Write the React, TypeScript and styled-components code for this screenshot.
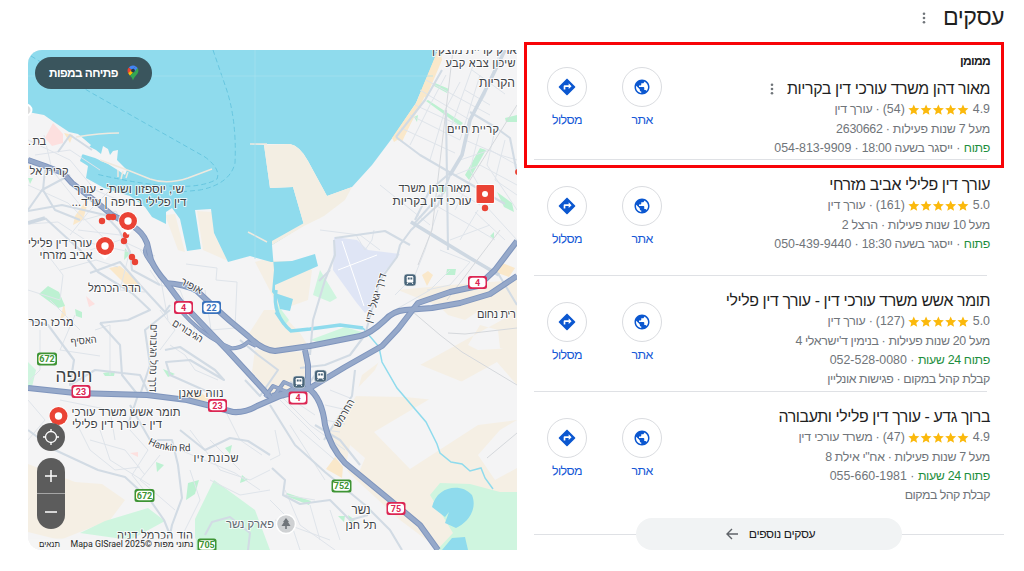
import React from "react";
import styled, { createGlobalStyle } from "styled-components";

const Global = createGlobalStyle`
  *{box-sizing:border-box}
  body{margin:0;background:#fff;font-family:"Liberation Sans",Arial,sans-serif;overflow:hidden}
`;
const Page = styled.main`
  display:grid;grid-template-columns:489px 1fr;column-gap:7px;
  width:1024px;height:571px;padding:0 20px 0 28px;direction:ltr;
`;
const MapPanel = styled.section`
  margin-top:50px;height:500px;border-radius:14px 0 0 14px;overflow:hidden;position:relative;background:#f4f4f5;
  & > svg{display:block}
`;
const OpenMap = styled.button`
  position:absolute;left:7px;top:7px;width:117px;height:32px;border:0;border-radius:16px;background:#3a555d;color:#fff;
  display:flex;align-items:center;justify-content:space-between;padding:0 13px 0 14px;direction:ltr;
  font:bold 11.8px "Liberation Sans",sans-serif;letter-spacing:-.55px;
`;
const MapControls = styled.div`
  position:absolute;left:9px;top:373px;width:28px;display:flex;flex-direction:column;gap:7px;
`;
const Locate = styled.button`
  width:28px;height:28px;padding:0;border:0;border-radius:50%;background:#5c5c5c;display:grid;place-items:center;
`;
const ZoomBox = styled.div`
  width:28px;height:71px;border-radius:14px;background:#5c5c5c;display:grid;grid-template-rows:35px 35px;row-gap:1px;overflow:hidden;
`;
const ZoomButton = styled.button<{ $line?: boolean }>`
  border:0;padding:0;background:transparent;display:grid;place-items:center;
  box-shadow:${p => (p.$line ? "0 1px 0 #a5a5a5" : "none")};
`;
const Results = styled.section`
  direction:rtl;display:flex;flex-direction:column;color:#1f1f1f;
`;
const Header = styled.header`
  height:41px;display:flex;align-items:flex-start;gap:16px;padding-top:3px;
`;
const Heading = styled.h1`
  margin:0;font-size:23.2px;line-height:28px;font-weight:400;color:#1f1f1f;letter-spacing:-.55px;
`;
const Kebab = styled.svg<{ $top?: number }>`
  width:6px;height:12px;flex:none;fill:#70757a;margin-top:${p => p.$top ?? 0}px;
`;
const Card = styled.article<{ $h: number; $line?: boolean }>`
  position:relative;height:${p => p.$h}px;margin:0 17px 0 10px;padding-top:${p => (p.$h === 119 ? 11 : 14)}px;
  display:flex;justify-content:space-between;
  border-bottom:${p => (p.$line ? "1px solid #dfe1e5" : "none")};
`;
const Highlight = styled.div`
  position:absolute;left:-10px;right:-17px;top:1px;height:126px;border:3px solid #f80307;pointer-events:none;
`;
const Info = styled.div`margin-right:-3px;white-space:nowrap;`;
const Sponsored = styled.div`font-size:12px;line-height:18px;font-weight:700;height:26px;color:#202124;letter-spacing:-.7px;`;
const TitleRow = styled.div`display:flex;align-items:center;gap:12px;height:22px;`;
const Title = styled.h2`
  margin:0;font-size:15.9px;line-height:22px;font-weight:400;color:#1f1f1f;letter-spacing:-.4px;
`;
const Line = styled.div`
  display:flex;align-items:center;height:19.4px;font-size:12.4px;line-height:19px;color:#70757a;white-space:pre;
`;
const Text = styled.span<{ $ls?: number }>`letter-spacing:${p => p.$ls ?? 0}px;`;
const Open = styled.span`color:#1e8e3e;letter-spacing:-.34px;`;
const Stars = styled.svg`width:61px;height:12px;margin:0 4px 0 3px;flex:none;`;
const Actions = styled.div`display:flex;gap:35px;height:80px;margin-left:13px;`;
const Action = styled.a<{ $up: number }>`
  width:40px;margin-top:${p => p.$up}px;display:flex;flex-direction:column;align-items:center;color:#1558d6;
  font-size:12.4px;line-height:16px;gap:5px;letter-spacing:-.6px;
`;
const Circle = styled.span`
  width:40px;height:40px;flex:none;border:1px solid #dadce0;border-radius:50%;display:grid;place-items:center;
`;
const MoreRow = styled.div`
  display:flex;align-items:center;height:32px;margin-left:10px;
`;
const Rule = styled.i<{ $w: number }>`width:${p => p.$w}px;height:1px;background:#dfe1e5;flex:none;`;
const MoreButton = styled.button`
  width:266px;height:32px;flex:none;border:0;border-radius:16px;background:#f1f3f4;color:#202124;display:flex;
  align-items:center;justify-content:center;gap:11px;font:12.2px "Liberation Sans",sans-serif;letter-spacing:-.4px;
  direction:rtl;padding:0 0 0 3px;
`;

const Dots = ({ top }: { top?: number }) => (
  <Kebab viewBox="0 0 6 12" $top={top}>
    <circle cx="3" cy="1.7" r="1.3" /><circle cx="3" cy="6" r="1.3" /><circle cx="3" cy="10.3" r="1.3" />
  </Kebab>
);
const RatingStars = () => (
  <Stars viewBox="0 0 61 12">
    {[0, 1, 2, 3, 4].map(i => (
      <path key={i} transform={`translate(${i * 12.3 + 0.6} 0.4) scale(.94)`} fill="#fbb90c"
        d="M5.5 0 7.15 3.8 11.3 4.2 8.15 6.9 9.1 11 5.5 8.85 1.9 11 2.85 6.9-.3 4.2 3.85 3.8z" />
    ))}
  </Stars>
);
const Directions = () => (
  <svg width="20" height="20" viewBox="0 0 24 24" fill="#0b57d0">
    <path d="M21.71 11.29l-9-9a.996.996 0 0 0-1.41 0l-9 9a.996.996 0 0 0 0 1.41l9 9c.39.39 1.02.39 1.41 0l9-9a.996.996 0 0 0 0-1.41zM14 14.5V12h-4v3H8v-4c0-.55.45-1 1-1h5V7.5l3.5 3.5-3.5 3.5z" />
  </svg>
);
const Globe = () => (
  <svg width="18" height="18" viewBox="0 0 24 24" fill="#0b57d0">
    <path d="M12 2C6.48 2 2 6.48 2 12s4.48 10 10 10 10-4.48 10-10S17.52 2 12 2zm-1 17.93c-3.95-.49-7-3.85-7-7.93 0-.62.08-1.21.21-1.79L9 15v1c0 1.1.9 2 2 2v1.93zm6.9-2.54c-.26-.81-1-1.39-1.9-1.39h-1v-3c0-.55-.45-1-1-1H8v-2h2c.55 0 1-.45 1-1V7h2c1.1 0 2-.9 2-2v-.41c2.93 1.19 5 4.06 5 7.41 0 2.08-.8 3.97-2.1 5.39z" />
  </svg>
);

type Biz = {
  title: string; rating: string; count: string; kind: string; years: string; yearsLs: number;
  open: string; hours?: string; phone: string; extra?: string; extraLs?: number; h: number; ad?: boolean;
};
const businesses: Biz[] = [
  { title: "מאור דהן משרד עורכי דין בקריות", rating: "4.9", count: "(54)", kind: "עורך דין", years: "מעל 7 שנות פעילות · 2630662", yearsLs: -0.25, open: "פתוח", hours: "ייסגר בשעה 18:00", phone: "054-813-9909", h: 119, ad: true },
  { title: "עורך דין פלילי אביב מזרחי", rating: "5.0", count: "(161)", kind: "עורך דין", years: "מעל 10 שנות פעילות · הרצל 2", yearsLs: -0.34, open: "פתוח", hours: "ייסגר בשעה 18:30", phone: "050-439-9440", h: 116 },
  { title: "תומר אשש משרד עורכי דין - עורך דין פלילי", rating: "5.0", count: "(127)", kind: "עורך דין", years: "מעל 20 שנות פעילות · בנימין ד'ישראלי 4", yearsLs: -0.37, open: "פתוח 24 שעות", phone: "052-528-0080", extra: "קבלת קהל במקום · פגישות אונליין", extraLs: -0.42, h: 116 },
  { title: "ברוך גדע - עורך דין פלילי ותעבורה", rating: "4.9", count: "(47)", kind: "משרד עורכי דין", years: "מעל 7 שנות פעילות · אח\"י אילת 8", yearsLs: -0.35, open: "פתוח 24 שעות", phone: "055-660-1981", extra: "קבלת קהל במקום", extraLs: -0.53, h: 126 },
];

const BusinessCard = ({ b }: { b: Biz }) => (
  <Card $h={b.h} $line={b.h !== 126}>
    <Info>
      {b.ad && <Sponsored>ממומן</Sponsored>}
      <TitleRow><Title>{b.title}</Title>{b.ad && <Dots />}</TitleRow>
      <Line><span>{b.rating}</span><RatingStars /><span>{b.count}</span><Text $ls={-0.25}>{" · "}{b.kind}</Text></Line>
      <Line><Text $ls={b.yearsLs}>{b.years}</Text></Line>
      <Line><Open>{b.open}</Open><span>{" · "}</span>{b.hours && <Text $ls={-0.26}>{b.hours + " · "}</Text>}<span>{b.phone}</span></Line>
      {b.extra && <Line><Text $ls={b.extraLs}>{b.extra}</Text></Line>}
    </Info>
    <Actions>
      <Action $up={b.ad ? 15 : 12}><Circle><Globe /></Circle>אתר</Action>
      <Action $up={b.ad ? 15 : 12}><Circle><Directions /></Circle>מסלול</Action>
    </Actions>
    {b.ad && <Highlight />}
  </Card>
);

const highways = [
  "M28 160 45 166 63 173 72 183 95 201 112 215 131 225Q143 232 147 243L151 260Q156 271 165 281L180 301 203 325 227 350 250 375 272 399",
  "M165 283Q185 284 197 291L212 305 230 321 248 336Q262 350 275 351L310 346 360 336Q370 334 385 320 393 311 405 310L432 308 460 303 490 294 517 276",
  "M272 396 310 388 345 367 382 346 398 329 418 303 450 292 478 286 495 270 517 241",
  "M305 350 308 365 308 388Q322 398 325 425 330 447 345 463L390 500 420 525 438 550",
  "M28 388 75 393 147 395 187 400 207 405 233 412Q245 413 257 406L280 396 310 388",
  "M147 246Q142 251 149 260L162 278M180 310Q200 333 222 344L231 348M265 397 273 386 287 392 295 387 284 382 275 395M225 348Q240 350 248 342L256 346",
];
const arterials = [
  "M396 137 420 155 451 173 505 204M505 50 488 85 470 120 462 155 450 175 438 205 411 230 400 245 397 257 380 280 365 335 350 355 325 365 300 368",
  "M396 137 425 100 442 70M450 173 430 190 415 220M470 112 495 127 510 138 517 173M411 222 470 258 499 275 517 305",
  "M28 211 62 205 105 215 119 230 130 252 132 270 160 285M90 273 120 262 140 285 165 312 170 305M45 218 80 250 98 272 132 293 150 310 128 320 100 323",
  "M28 320 48 325 74 360 70 385 95 370 140 375 150 396M100 323 120 345 122 375 138 395 128 425M140 395 150 365 145 330 170 310",
  "M28 430 55 450 98 470 125 477 150 500 164 520 170 535 172 525 182 498 178 465 172 440 150 440 130 405",
  "M270 405 295 445 325 472 365 505 390 530 402 550M272 468 285 480 283 495 300 504 330 500 350 520 368 515M360 465 340 440 315 425",
  "M180 430 205 450 230 438 248 441 270 455M245 380 260 396 278 370 258 355 240 340M315 375 306 388 290 382",
  "M334 240 335 255 325 280 313 320 310 355M335 238 385 231 410 245M446 110 448 250M165 350 180 347 215 370 224 380 190 360 166 362 170 375 215 395",
  "M330 270 319 281M413 225 440 195M355 370 352 396 324 440M28 210 42 190 70 175M45 170 43 190 55 210 80 220M58 152 70 135 92 150M205 535 212 522 230 517 250 533 248 550",
];
const streets = [
  "M28 140 70 160 95 190 130 205M35 155 70 150 100 170M44 135 52 170 80 205M28 185 68 203 110 244M28 224 58 222 90 243 130 252M70 235 90 210 110 190",
  "M83 220 116 211 125 230M78 230 120 235M90 250 120 240 155 256M40 245 63 275 60 300 28 290M60 270 96 260 118 267M75 315 60 350 100 356M40 330 40 370 28 382M50 300 80 330M130 250 120 290 145 292M140 250 160 275 168 320",
  "M150 270 160 285 180 290 195 330M186 264 217 268 216 280 237 282 235 328 211 330 205 290M160 310 175 330 160 350M95 330 110 325 110 375M170 345 185 355 195 370 218 380",
  "M60 400 110 410 115 440M75 420 90 450 115 470 140 467M28 400 45 420 28 440M130 430 148 450 132 475 152 500M90 440 125 450 145 475M160 455 140 480 175 510M100 430 110 460 150 485M180 450 235 473 260 490M190 430 220 470 250 480 270 470M220 400 240 440 262 455",
  "M426 80 490 115M420 90 470 120M415 105 465 128M410 115 460 140M401 128 455 153M446 75 430 105 410 145M460 82 445 110 430 160M475 60 450 130M480 75 460 140M500 52 485 95 475 112M472 70 505 94M465 90 490 105",
  "M460 160 490 150 517 165M455 175 480 165 517 185M465 140 500 155 517 160M480 130 470 170 490 205M495 130 487 165 517 210M505 140 495 180 517 195M435 205 470 225 495 240M455 190 480 205M470 180 455 210M460 240 478 210M485 205 517 240M475 212 505 240M450 240 490 225",
  "M320 230 360 235 380 250M356 235 365 250 372 240 374 230M380 185 430 225M438 210 425 250 415 275 395 295M395 310 430 290 450 270M427 290 450 285 470 262 440 250",
  "M275 390 310 425 345 450M280 400 320 440M285 395 315 415M290 425 325 480M300 430 335 460M330 390 350 398M325 405 347 410M325 420 345 424M325 430 340 432M275 430 280 455 270 460",
  "M270 500 290 520 300 550M285 490 300 525 335 550M310 505 320 540M330 510 340 540M275 520 330 540M285 495 315 500M180 540 200 500 190 470M210 480 240 495 270 490M210 440 240 470",
];
type Lbl = { t: string; x: number; y: number; w: number; s?: number; r?: number; c?: string };
const labels: Lbl[] = [
  { t: "פארק קריית מוצקין", x: 478, y: 54, w: 92, s: 11.5 },
  { t: "שיכון צבא קבע", x: 480.5, y: 67, w: 70, s: 11 },
  { t: "הקריות", x: 497, y: 87, w: 36, s: 13 },
  { t: "קריית חיים", x: 473, y: 133, w: 52, s: 11 },
  { t: "מאור דהן משרד", x: 434.5, y: 192, w: 72 },
  { t: "עורכי דין בקריות", x: 432, y: 205, w: 79 },
  { t: "בת .", x: 37, y: 145, w: 18, s: 11 },
  { t: "קרית אל", x: 49, y: 175, w: 39, s: 11 },
  { t: "שי, יוספזון ושות' - עורך", x: 129, y: 193, w: 110 },
  { t: "דין פלילי בחיפה | עו\"ד...", x: 129, y: 206, w: 115 },
  { t: "עורך דין פלילי", x: 60, y: 247, w: 64 },
  { t: "אביב מזרחי", x: 66, y: 259, w: 53 },
  { t: "הדר הכרמל", x: 114.5, y: 292, w: 53, s: 11 },
  { t: "מרכז הכר", x: 51, y: 326, w: 45, s: 11 },
  { t: "חיפה", x: 74, y: 382, w: 37, s: 19 },
  { t: "האסיף", x: 84, y: 344, w: 26, s: 10.5, r: -6 },
  { t: "אופיר", x: 190, y: 289, w: 23, s: 10.5, r: 27 },
  { t: "הגיבורים", x: 186, y: 334, w: 34, s: 10.5, r: 32 },
  { t: "דרך נחל הגיבורים", x: 150, y: 358, w: 68, s: 10.5, r: 91 },
  { t: "דרך יגאל ידין", x: 379, y: 299, w: 51, s: 10.5, r: -73 },
  { t: "רית נחום", x: 496.5, y: 318, w: 39, s: 11 },
  { t: "החרמש", x: 347, y: 415, w: 31, s: 10.5, r: -60 },
  { t: "נווה שאנן", x: 201, y: 397, w: 45, s: 11 },
  { t: "תומר אשש משרד עורכי", x: 126, y: 416, w: 109 },
  { t: "דין - עורך דין פלילי", x: 117, y: 428, w: 90 },
  { t: "שכונת זיו", x: 216, y: 462, w: 45, s: 11 },
  { t: "נשר", x: 361, y: 514, w: 19, s: 13 },
  { t: "תל חנן", x: 361, y: 529, w: 31, s: 11 },
  { t: "פארק נשר", x: 250, y: 528, w: 48, s: 12, c: "#5f6870" },
  { t: "הוד הכרמל דניה", x: 155, y: 539, w: 76, s: 11 },
];
const Shield = ({ x, y, n, c, w = 19 }: { x: number; y: number; n: string; c: string; w?: number }) => (
  <g>
    <rect x={x - w / 2} y={y - 6.5} width={w} height="13" rx="2.5" fill={c} />
    <rect x={x - w / 2 + 1.5} y={y - 4.8} width={w - 3} height="9.6" rx="3" fill="#fff" />
    <text x={x} y={y + 3.2} textAnchor="middle" fontSize="9" fontWeight="700" fontFamily="Roboto, sans-serif" fill={c}>{n}</text>
  </g>
);
const Pin = ({ x, y }: { x: number; y: number }) => (
  <g>
    <path d={`M${x - 8} ${y + 5} ${x} ${y + 14} ${x + 8} ${y + 5}z`} fill="#fff" />
    <circle cx={x} cy={y} r="9.8" fill="#fff" /><circle cx={x} cy={y} r="9" fill="#ea4335" /><circle cx={x} cy={y} r="3.7" fill="#fff" />
  </g>
);
const Train = ({ x, y }: { x: number; y: number }) => (
  <g>
    <rect x={x - 6} y={y - 6} width="12" height="12" rx="3" fill="#49657a" stroke="#dfe5ea" strokeWidth=".6" />
    <rect x={x - 3.3} y={y - 4} width="6.6" height="6.5" rx="1.3" fill="#fff" />
    <path d={`M${x - 2.2} ${y - 2.5}h1.9v2h-1.9zM${x + 0.4} ${y - 2.5}h1.9v2h-1.9z`} fill="#49657a" />
    <path d={`M${x - 2} ${y + 2.5}l-1 1.6M${x + 2} ${y + 2.5}l1 1.6`} stroke="#fff" />
  </g>
);

const CityMap = () => (
  <svg width="489" height="500" viewBox="28 50 489 500">
    <rect x="28" y="50" width="489" height="500" fill="#f4f4f5" />
    <g fill="#f5efe4">
      <path d="M28 464 75 482 102 484 125 500 110 520 60 540 28 532zM278 310 300 333 312 352 306 347 270 350 248 335 264 310zM262 260 300 262 312 270 308 300 280 310 255 262zM255 350 305 352 308 385 275 398 252 372z" />
      <path d="M362 375 382 360 420 365 520 310 517 352 500 348 498 330 480 325 468 345 478 350 517 348V550H440L400 520 350 474 330 448 330 430 350 405 356 396z" />
      <path d="M398 290 450 285 517 280 517 315 480 310 465 320 448 315 440 307zM197 211 213 212 214 234 228 261 203 250zM165 215 175 214 185 252 178 250z" />
    </g>
    <g fill="#f4f4f5"><path d="M374 432 428 400 497 362 517 385V420L478 425 410 469zM478 455 500 430 517 420V468L495 480zM345 470 350 445 365 458 360 470zM350 396 375 370 384 350 470 385 435 400 405 397zM315 370 338 362 360 372 350 395 324 440 315 400z" /></g>
    <g fill="#fae8ca"><path d="M440 50 433 55 418 92 426 98 442 60zM409 115 391 137 402 142 412 120zM75 216 90 195 83 220 73 225zM109 268 120 266 140 283 132 291zM326 469 335 457 343 467 342 478zM64 303 60 320 66 315zM500 262 515 268 509 277 495 272zM422 275 428 271 433 275 427 286zM64 133 73 135 70 143zM180 395 200 402 210 400 200 392z" /></g>
    <g fill="#cff5df"><path d="M28 362 36 370 32 387 28 388zM105 521 148 508 165 521 130 540 80 533zM195 519 214 480 255 510 270 550H195zM430 495 440 483 470 484 500 492H517V550H437L453 533zM320 270 337 298 330 302 313 295zM310 340 345 327 365 333 325 344zM274 300 289 320 285 325 277 313z" /></g>
    <g fill="#bdf1d2"><path d="M39 294 48 286 59 292 65 306 58 308zM75 309 82 312 82 318 76 316zM103 373 115 371 114 376 105 376zM163 369 175 374 168 377zM28 178 33 178 30 184zM125 248 130 254 124 260zM435 83 449 89 447 93 434 86zM414 117 418 115 417 122zM428 100 463 123 460 126 426 101zM465 175 480 148 486 150 469 180zM440 184 448 188 444 194 438 191zM497 192 512 203 514 212 504 207zM447 269 456 269 455 275 446 275zM287 493 311 501 309 505 286 496zM490 236 494 232 494 239zM156 462 164 465 157 472zM188 483 199 480 195 494 186 500zM242 475 248 480 240 483zM505 118 517 115 517 122 506 122zM225 448 232 445 230 454zM338 516 345 516 344 522zM348 515 355 520 350 524z" /></g>
    <path d="M334 237 357 240 368 250 400 254 378 279 370 308 365 313 356 302 333 270z" fill="#dfe5f5" />
    <path d="m338 270 39-15M342 241l22 65" stroke="#fff" fill="none" />
    <path d="M45 138 53 123 63 134 63 143 52 146zM86 296 95 304 89 307zM130 453 138 452 138 457z" fill="#fde0df" />
    <path d="M28 112 44 115 54 122 69 132 78 134 84 139 91 145 82 155 80 161 88 166 86 178 104 188 130 196 145 207 152 217 166 224 166 212 172 208 180 219 187 251 201 249 195 210 211 209 214 233 228 262 250 256 271 262 292 261 315 254 318 266 275 285 275 293 293 299 290 311 280 309 277 298 272 292 274 270 272 245 304 225 293 187 270 188 264 145 250 144 270 144 290 144Q300 146 308 161L327 196 352 187 372 165 393 137 416 103 438 50H28z" fill="#8fdbed" />
    <path d="M264 145 290 144Q300 146 308 161L327 196 352 187 320 218 304 225 293 187 270 188z" fill="#f3eee3" />
    <path d="M352 187 345 200 324 216 304 226 272 245 272 241 304 223 320 208z" fill="#f3eee3" />
    <path d="M82 154 84 144 96 150 101 154 103 146 108 149 110 155 113 151 118 150 117 160 127 170 125 175 116 169 108 164 95 158z" fill="#f4f4f5" />
    <path d="M438 50 443 52 427 92 405 135 394 142 392 138 416 103z" fill="#fae8ca" />
    <path d="M76 137Q100 133 119 133M100 160 130 171 150 179Q167 185 188 178L212 169M250 144H267M248 232 267 242M118 170v7M123 171l-2 8M128 172l-2 6" fill="none" stroke="#eee9df" strokeWidth="1.5" />
    <path d="M31 56 90 92 205 157Q221 169 217 179 190 196 96 174M213 50 225 85Q237 118 235 163 230 184 200 190L180 192" fill="none" stroke="#68c6df" strokeWidth="1" strokeDasharray="5 3" />
    <path d="M28 76H433M255 50V259" stroke="#a8e2ef" strokeWidth=".7" />
    <path d="M276 290Q272 315 291 331L310 329 340 325 363 328M276 312 284 324" fill="none" stroke="#8fdbed" strokeWidth="3.5" />
    <path d="M363 328 379 347 382 362 397 388 426 422 437 444 440 453 451 462 462 464 470 471 481 468 485 478 493 489" fill="none" stroke="#8fdbed" strokeWidth="1.5" />
    <path d="M432 507C437 485 462 483 472 495 478 510 467 523 456 528L445 523 449 512 445 517zM442 550 452 538 465 537 468 550z" fill="#8fdbed" />
    {streets.map(d => <path key={d} d={d} fill="none" stroke="#dfe4ea" strokeWidth="1" />)}
    {arterials.map(d => <path key={d} d={d} fill="none" stroke="#d2dbe4" strokeWidth="2.1" strokeLinejoin="round" />)}
    <path d="M505 50 488 85 470 120 462 155 450 175M28 223 45 218M411 222 470 258 499 275" fill="none" stroke="#ced8e2" strokeWidth="3.6" strokeLinejoin="round" />
    <path d="M413 312 440 335 462 352 517 385M500 230 447 300M448 333 465 334 517 328M487 458 517 433M517 105 470 180M453 50 432 230 418 265" fill="none" stroke="#d5d8dc" strokeWidth="1" />
    {highways.map((d, i) => <path key={d} d={d} fill="none" stroke="#7f95bd" strokeWidth={i === 5 ? 4 : 6} strokeLinejoin="round" />)}
    {highways.map((d, i) => <path key={d} d={d} fill="none" stroke="#96a9ca" strokeWidth={i === 5 ? 2.5 : 4} strokeLinejoin="round" />)}
    <g fill="#ea4335">
      <circle cx="102" cy="221" r="3.2" /><circle cx="109" cy="217" r="3.2" /><circle cx="113" cy="217" r="3.2" /><circle cx="126" cy="235" r="3.2" /><circle cx="124" cy="241" r="3.2" /><circle cx="132" cy="257" r="3.2" /><circle cx="135" cy="262" r="3.2" /><circle cx="485" cy="208" r="3.2" /><circle cx="518" cy="172" r="3" />
    </g>
    <rect x="475.5" y="184" width="19" height="20" rx="1" fill="#fff" /><rect x="476.5" y="185" width="17.5" height="18" rx="1" fill="#ea4335" /><circle cx="485" cy="194" r="3" fill="#fff" />
    <circle cx="26" cy="110" r="5.5" fill="#ddd" stroke="#fff" strokeWidth="2" />
    <Pin x={128} y={221} /><Pin x={105} y={246} /><Pin x={58.5} y={416} />
    <Train x={410} y={280} /><Train x={320.5} y={376} /><Train x={299} y={382} />
    <circle cx="286" cy="524" r="9.5" fill="#cfd1d3" stroke="#fff" strokeWidth="1.5" />
    <path d="m286 518-3 4h1l-2.5 4h3.7v3h1.6v-3h3.7l-2.5-4h1z" fill="#70757a" />
    <g fontFamily="'Liberation Sans', sans-serif" stroke="#fff" strokeWidth="2" paintOrder="stroke" strokeLinejoin="round" strokeOpacity=".8">
      {labels.map(l => (
        <text key={l.t} x={l.x} y={l.y} fontSize={l.s ?? 12} textAnchor="middle" direction="rtl" textLength={l.w}
          lengthAdjust={l.s === 11 ? "spacing" : "spacingAndGlyphs"} fill={l.c ?? "#3f4347"}
          transform={l.r ? `rotate(${l.r} ${l.x} ${l.y})` : undefined}>{l.t}</text>
      ))}
      <path id="hankin" d="M148 444Q163 453 192 451" fill="none" stroke="none" />
      <text fontFamily="Roboto, sans-serif" fontSize="10" fill="#3f4347" textLength="44"><textPath href="#hankin">Hankin Rd</textPath></text>
    </g>
    <Shield x={183.5} y={307.5} n="4" c="#dc2653" /><Shield x={211.5} y={307.5} n="22" c="#3972bd" />
    <Shield x={477.5} y={282.5} n="4" c="#dc2653" /><Shield x={298} y={398} n="4" c="#dc2653" />
    <Shield x={81} y={391.5} n="23" c="#dc2653" /><Shield x={217.5} y={405.5} n="23" c="#dc2653" />
    <Shield x={396} y={508.5} n="75" c="#dc2653" /><Shield x={47} y={359} n="672" c="#3e9434" w={20} />
    <Shield x={144.5} y={495.5} n="672" c="#3e9434" w={20} /><Shield x={341.5} y={486} n="752" c="#3e9434" w={20} />
    <path d="M28 538.5H196V550H28z" fill="#f5f5f5" fillOpacity=".85" />
    <Shield x={207} y={545} n="705" c="#3e9434" w={19} />
    <g fontSize="9" fill="#1f1f1f" fontFamily="Roboto, 'Liberation Sans', sans-serif">
      <text x="49.5" y="547" textAnchor="middle" direction="rtl" textLength="21" lengthAdjust="spacingAndGlyphs">תנאים</text>
      <text x="132" y="547" textAnchor="middle" direction="rtl" textLength="123" lengthAdjust="spacingAndGlyphs">נתוני מפות ©2025 Mapa GISrael</text>
    </g>
  </svg>
);

export default function App() {
  return (
    <>
      <Global />
      <Page>
        <MapPanel>
          <CityMap />
          <OpenMap>
            <span dir="rtl">פתיחה במפות</span>
            <svg width="12" height="16" viewBox="0 0 12 16">
              <path d="M6 .5A5.3 5.3 0 0 0 1.8 2.5L5 5.2 8.8 1.2A5 5 0 0 0 6 .5z" fill="#4285f4" />
              <path d="M1.8 2.5A5.3 5.3 0 0 0 1.2 8.3L5 5.2z" fill="#ea4335" />
              <path d="M1.2 8.3 3 10.7 8 5.5 5 4.5z" fill="#fbbc04" />
              <path d="M10.6 3A5.3 5.3 0 0 1 10.6 8.4C9 10.7 7.3 11.5 6 15.5 5.4 13 4.5 12 3 10.7z" fill="#34a853" />
              <path d="M8.8 1.2 10.6 3 7.3 7 5.5 4.7z" fill="#4285f4" />
              <circle cx="6" cy="5.6" r="1.9" fill="#263b45" />
            </svg>
          </OpenMap>
          <MapControls>
            <Locate>
              <svg width="18" height="18" viewBox="0 0 18 18" fill="none" stroke="#fff" strokeWidth="1.3"><circle cx="9" cy="9" r="5.5" /><path d="M9 1v3M9 14v3M1 9h3M14 9h3" /></svg>
            </Locate>
            <ZoomBox>
              <ZoomButton $line><svg width="12" height="12" stroke="#fff" strokeWidth="1.5"><path d="M6 0v12M0 6h12" /></svg></ZoomButton>
              <ZoomButton><svg width="12" height="12" stroke="#fff" strokeWidth="1.5"><path d="M0 6h12" /></svg></ZoomButton>
            </ZoomBox>
          </MapControls>
        </MapPanel>
        <Results>
          <Header><Heading>עסקים</Heading><Dots top={9} /></Header>
          {businesses.map(b => <BusinessCard key={b.title} b={b} />)}
          <MoreRow>
            <Rule $w={102} />
            <MoreButton>
              עסקים נוספים
              <svg width="12" height="12" viewBox="0 0 12 12" fill="none" stroke="#5f6368" strokeWidth="1.4"><path d="M12 6H1M6 1 1 6l5 5" /></svg>
            </MoreButton>
            <Rule $w={102} />
          </MoreRow>
        </Results>
      </Page>
    </>
  );
}
